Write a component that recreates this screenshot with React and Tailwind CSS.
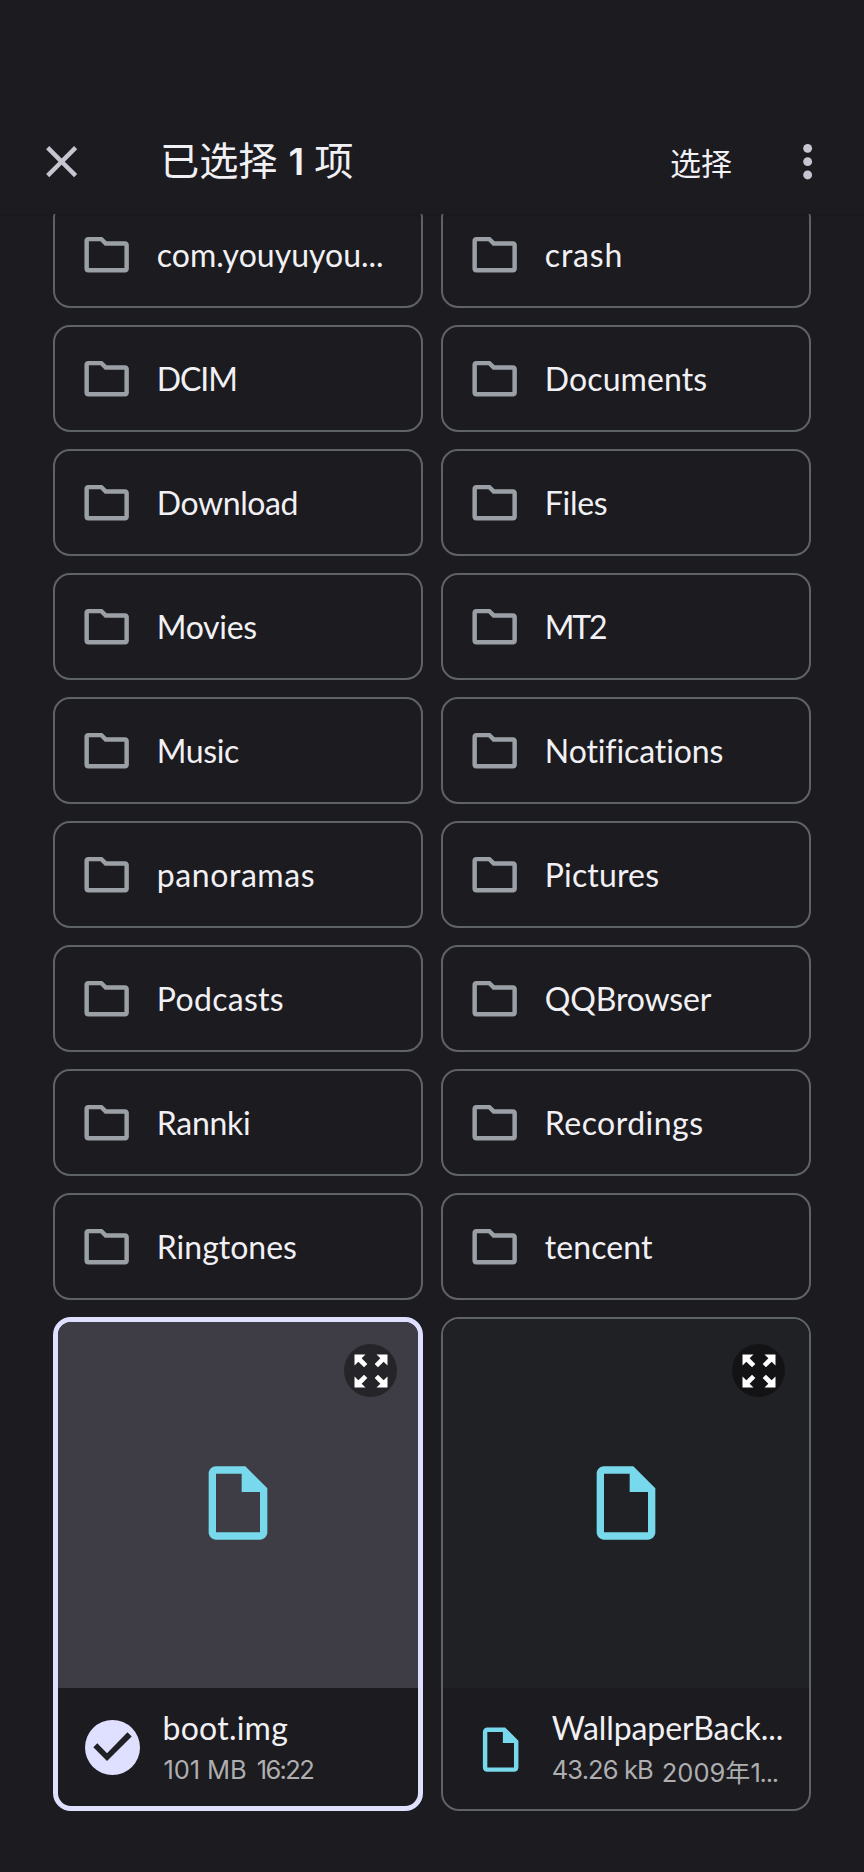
import React from 'react';

const FOLDERS = [
  ['com.youyuyou...', ''],
  ['crash', 'tracking-[0.8px]'],
  ['DCIM', 'tracking-[-1.1px]'],
  ['Documents', 'tracking-[0.1px]'],
  ['Download', 'tracking-[-0.4px]'],
  ['Files', 'tracking-[-0.3px]'],
  ['Movies', 'tracking-[-0.3px]'],
  ['MT2', 'tracking-[-2.2px]'],
  ['Music', 'tracking-[-0.4px]'],
  ['Notifications', 'tracking-[-0.1px]'],
  ['panoramas', 'tracking-[0.57px]'],
  ['Pictures', 'tracking-[0.15px]'],
  ['Podcasts', 'tracking-[0.3px]'],
  ['QQBrowser', 'tracking-[-0.15px]'],
  ['Rannki', 'tracking-[-0.28px]'],
  ['Recordings', 'tracking-[0.47px]'],
  ['Ringtones', ''],
  ['tencent', 'tracking-[0.1px]'],
];

function CloseIcon() {
  return (
    <svg viewBox="0 0 24 24" className="size-[53.3px] fill-[#c8c5d0]">
      <path d="M19 6.41 17.59 5 12 10.59 6.41 5 5 6.41 10.59 12 5 17.59 6.41 19 12 13.41 17.59 19 19 17.59 13.41 12z" />
    </svg>
  );
}

function MoreIcon() {
  return (
    <svg viewBox="0 0 24 24" className="size-[53.3px] fill-[#c8c5d0]">
      <circle cx="12" cy="6" r="2" />
      <circle cx="12" cy="12" r="2" />
      <circle cx="12" cy="18" r="2" />
    </svg>
  );
}

function FolderIcon() {
  return (
    <svg viewBox="0 0 24 24" className="mt-px size-[53.3px] shrink-0 fill-[#9aa0a6]">
      <path d="M9.17 6l2 2H20v10H4V6h5.17M10 4H3.7C2.75 4 2 4.75 2 5.7v12.6c0 .95.75 1.7 1.7 1.7h16.6c.95 0 1.7-.75 1.7-1.7V7.7c0-.95-.75-1.7-1.7-1.7H12z" />
    </svg>
  );
}

function FileIcon({ className }) {
  return (
    <svg viewBox="0 0 24 24" className={className}>
      <path
        fill="#78d9ec"
        fillRule="evenodd"
        d="M14 2H6c-1.1 0-2 .9-2 2v16c0 1.1.9 2 2 2h12c1.1 0 2-.9 2-2V8zM6 20V4h7v5h5v11z"
      />
    </svg>
  );
}

function ExpandIcon() {
  return (
    <svg viewBox="0 0 24 24" className="size-[44px] fill-white">
      <path d="M15 3l2.1 2.1-3.1 3.1 1.8 1.8 3.1-3.1L21 9V3zM3 9l2.1-2.1L8.2 10 10 8.2 6.9 5.1 9 3H3zm6 12-2.1-2.1L10 15.8 8.2 14l-3.1 3.1L3 15v6zm12-6-2.1 2.1L15.8 14 14 15.8l3.1 3.1L15 21h6z" />
    </svg>
  );
}

function CheckBadge() {
  return (
    <svg viewBox="0 0 55 55" className="size-[55px] shrink-0">
      <circle cx="27.5" cy="27.5" r="27.5" fill="#dfe0ff" />
      <path d="M8.3 27.3l4-4L22 33.2l20.5-20.9 4.2 4.2L22 41z" fill="#202124" />
    </svg>
  );
}

function FolderCard({ name, tracking }) {
  return (
    <div className="flex h-[107px] items-center rounded-[17px] border-2 border-[#5f6368] pl-[25px] pr-8">
      <FolderIcon />
      <span className={'ml-[23.5px] whitespace-nowrap text-[32px] leading-[40px] ' + tracking}>{name}</span>
    </div>
  );
}

function Preview({ className, badge }) {
  return (
    <div className={'relative flex items-center justify-center ' + className}>
      <FileIcon className="size-[88px]" />
      <div className={'absolute flex size-[53px] items-center justify-center rounded-full bg-black/40 ' + badge}>
        <ExpandIcon />
      </div>
    </div>
  );
}

export default function App() {
  return (
    <div className="h-[1872px] w-[864px] overflow-hidden bg-[#1c1b1f] font-['Lato','Noto_Sans_CJK_SC',sans-serif] text-[#f1f0f4]">
      <header className="relative z-10 flex h-[214px] items-center bg-[#1c1b1f] pl-[35px] pr-[30px] pt-[109px] shadow-[0_1px_3px_rgba(0,0,0,0.15)]">
        <CloseIcon />
        <h1 className="ml-[71.7px] flex items-baseline whitespace-nowrap pb-[3px] font-['Noto_Sans_CJK_SC',sans-serif] text-[39.2px] leading-[56px]">
          已选择
          <span className="ml-[11px] mr-[10px] font-['Inter',sans-serif] text-[37px] font-semibold">1</span>
          项
        </h1>
        <button className="ml-auto font-['Noto_Sans_CJK_SC',sans-serif] text-[31px] leading-[46px]">选择</button>
        <div className="ml-[48.7px]">
          <MoreIcon />
        </div>
      </header>

      <main className="h-[1658px] overflow-hidden">
        <div className="-mt-[13px] grid grid-cols-[370px_370px] gap-x-[18px] gap-y-[17px] pl-[53px]">
          {FOLDERS.map(([name, tracking]) => (
            <FolderCard key={name} name={name} tracking={tracking} />
          ))}

          <div className="flex h-[494px] flex-col overflow-hidden rounded-[18px] border-[5px] border-[#dfe0ff]">
            <Preview className="-mt-[3px] h-[369px] shrink-0 bg-[#3e3d45] pb-[2px]" badge="right-[21px] top-[25px]" />
            <div className="flex flex-1 pl-[27px] pt-[32px]">
              <CheckBadge />
              <div className="ml-[22.5px] -mt-[12px] whitespace-nowrap">
                <p className="text-[32px] leading-[40px] tracking-[0.25px]">boot.img</p>
                <p className="mt-[4px] flex gap-[10px] pl-px font-['Inter',sans-serif] text-[25.5px] leading-[36px] text-[#aeaeb0]">
                  <span className="tracking-[-0.1px]">101 MB</span>
                  <span className="tracking-[-1.6px]">16:22</span>
                </p>
              </div>
            </div>
          </div>

          <div className="flex h-[494px] flex-col overflow-hidden rounded-[18px] border-2 border-[#5f6368]">
            <Preview className="h-[369px] shrink-0 bg-[#202124] pb-[2px]" badge="right-[24px] top-[25px]" />
            <div className="flex flex-1 pl-[31px] pt-[35px]">
              <FileIcon className="size-[53.3px] shrink-0" />
              <div className="ml-[24.5px] -mt-[15px] whitespace-nowrap">
                <p className="text-[32px] leading-[40px] tracking-[-0.1px]">WallpaperBack...</p>
                <p className="mt-[4px] flex gap-[9px] font-['Inter','Noto_Sans_CJK_SC',sans-serif] text-[25.5px] leading-[36px] text-[#aeaeb0]">
                  <span className="tracking-[-0.9px]">43.26 kB</span>
                  <span className="flex pt-[3px]">
                    <span>2009</span>
                    <span className="text-[25px]">年</span>
                    <span className="tracking-[-1.2px]">1...</span>
                  </span>
                </p>
              </div>
            </div>
          </div>
        </div>
      </main>
    </div>
  );
}
